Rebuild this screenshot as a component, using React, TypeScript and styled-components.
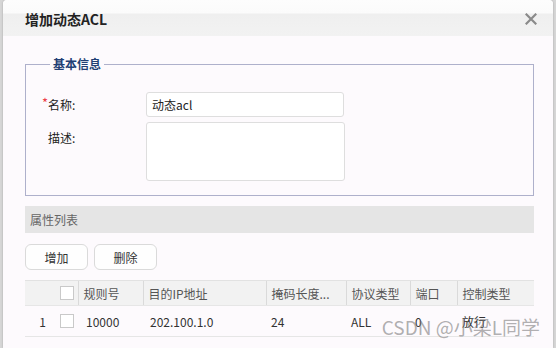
import styled, { createGlobalStyle } from "styled-components";

const GlobalStyle = createGlobalStyle`
  html, body {
    margin: 0;
    padding: 0;
    background: #d6d6d6;
    font-family: "Noto Sans CJK SC", "Noto Sans", sans-serif;
    font-size: 12px;
    color: #333;
  }
`;

const columns = [
  { key: "idx", title: "", width: 30 },
  { key: "check", title: "", width: 23 },
  { key: "rule", title: "规则号", width: 65 },
  { key: "ip", title: "目的IP地址", width: 123 },
  { key: "mask", title: "掩码长度...", width: 80 },
  { key: "proto", title: "协议类型", width: 64 },
  { key: "port", title: "端口", width: 47 },
  { key: "action", title: "控制类型", width: 77 },
];

const rows = [
  { idx: "1", rule: "10000", ip: "202.100.1.0", mask: "24", proto: "ALL", port: "0", action: "放行" },
];

const CloseIcon = () => (
  <svg width="12" height="12" viewBox="0 0 12 12">
    <path d="M1.5 1.5 L10.5 10.5 M10.5 1.5 L1.5 10.5" stroke="#8a8a8a" strokeWidth="2.2" strokeLinecap="square" />
  </svg>
);

export default function App() {
  return (
    <>
      <GlobalStyle />
      <Page>
        <Dialog>
          <Header>
            <Title>增加动态ACL</Title>
            <CloseButton aria-label="close">
              <CloseIcon />
            </CloseButton>
          </Header>
          <Body>
            <FieldSet>
              <Legend>基本信息</Legend>
              <FormGrid>
                <Label>
                  <Required>*</Required>名称:
                </Label>
                <TextInput defaultValue="动态acl" />
                <Label $top={3}>
                  <Required />描述:
                </Label>
                <TextArea />
              </FormGrid>
            </FieldSet>

            <SectionBar>属性列表</SectionBar>

            <Toolbar>
              <Button>增加</Button>
              <Button>删除</Button>
            </Toolbar>

            <Table>
              <colgroup>
                {columns.map((c) => (
                  <col key={c.key} style={{ width: c.width }} />
                ))}
              </colgroup>
              <thead>
                <tr>
                  {columns.map((c, i) => (
                    <HeadCell key={c.key} $divider={i >= 2}>
                      {c.key === "check" ? <CheckBox /> : c.title}
                    </HeadCell>
                  ))}
                </tr>
              </thead>
              <tbody>
                {rows.map((r) => (
                  <tr key={r.idx}>
                    <Cell $center>{r.idx}</Cell>
                    <Cell>
                      <CheckBox />
                    </Cell>
                    <Cell $indent={8}>{r.rule}</Cell>
                    <Cell $indent={7}>{r.ip}</Cell>
                    <Cell>{r.mask}</Cell>
                    <Cell>{r.proto}</Cell>
                    <Cell>{r.port}</Cell>
                    <Cell>{r.action}</Cell>
                  </tr>
                ))}
              </tbody>
            </Table>
          </Body>
          <Watermark>CSDN @小梁L同学</Watermark>
        </Dialog>
      </Page>
    </>
  );
}

const Page = styled.div`
  width: 556px;
  height: 348px;
  overflow: hidden;
  display: flex;
`;

const Dialog = styled.div`
  position: relative;
  width: 550px;
  height: 348px;
  margin-left: 3px;
  background: #fdfafd;
  border-radius: 4px 4px 0 0;
  box-shadow: 0 0 2px rgba(0, 0, 0, 0.25);
  display: flex;
  flex-direction: column;
`;

const Header = styled.div`
  height: 36px;
  flex-shrink: 0;
  display: flex;
  align-items: center;
  justify-content: space-between;
  padding: 0 16px 0 22px;
  background: linear-gradient(#fdfdfd 0, #fbfbfb 13px, #efefef 14px, #f2f2f2 36px);
  border-radius: 4px 4px 0 0;
`;

const Title = styled.div`
  font-size: 14px;
  font-weight: bold;
  color: #222;
  line-height: 18px;
  margin-top: 2px;
`;

const CloseButton = styled.div`
  width: 12px;
  height: 12px;
  display: flex;
  margin-top: 1px;
`;

const Body = styled.div`
  padding: 0 19px 0 22px;
  display: flex;
  flex-direction: column;
`;

const FieldSet = styled.fieldset`
  margin: 20px 0 0;
  padding: 20px 0 14px 16px;
  border: 1px solid #aeb0cb;
  min-width: 0;
`;

const Legend = styled.legend`
  margin-left: 8px;
  padding: 0 3px;
  font-size: 12px;
  line-height: 16px;
  font-weight: bold;
  color: #223f74;
`;

const FormGrid = styled.div`
  display: grid;
  grid-template-columns: 104px 199px;
  row-gap: 5px;
  align-items: start;
`;

const Label = styled.label<{ $top?: number }>`
  display: flex;
  line-height: 25px;
  padding-top: ${(p) => p.$top ?? 0}px;
  color: #222;
`;

const Required = styled.span`
  width: 6px;
  color: #ee3d48;
  font-size: 13px;
  line-height: 21px;
`;

const TextInput = styled.input`
  box-sizing: border-box;
  width: 198px;
  height: 25px;
  padding: 0 5px;
  border: 1px solid #dedede;
  border-radius: 3px;
  background: #fff;
  font-family: inherit;
  font-size: 12px;
  color: #222;
  outline: none;
`;

const TextArea = styled.textarea`
  box-sizing: border-box;
  width: 199px;
  height: 59px;
  padding: 4px 5px;
  border: 1px solid #dedede;
  border-radius: 3px;
  background: #fff;
  resize: none;
  outline: none;
  font-family: inherit;
`;

const SectionBar = styled.div`
  margin-top: 10px;
  height: 27px;
  line-height: 27px;
  padding-left: 5px;
  background: #e5e5e5;
  color: #666;
  font-size: 12px;
`;

const Toolbar = styled.div`
  margin-top: 11px;
  display: flex;
  gap: 6px;
`;

const Button = styled.button`
  width: 63px;
  height: 26px;
  border: 1px solid #dadada;
  border-radius: 6px;
  background: #fefefe;
  font-family: inherit;
  font-size: 12px;
  color: #333;
  padding: 0;
`;

const Table = styled.table`
  margin-top: 10px;
  width: 509px;
  table-layout: fixed;
  border-collapse: collapse;
`;

const HeadCell = styled.th<{ $divider?: boolean }>`
  height: 24px;
  padding: 0 0 0 5px;
  background: #f2f2f2;
  border-top: 1px solid #e2e2e2;
  border-bottom: 1px solid #e6e6e6;
  border-left: ${(p) => (p.$divider ? "1px solid #dadada" : "none")};
  text-align: left;
  font-weight: normal;
  color: #555;
  white-space: nowrap;
  overflow: hidden;
`;

const Cell = styled.td<{ $center?: boolean; $indent?: number }>`
  height: 30px;
  padding: 0 0 0 ${(p) => p.$indent ?? 5}px;
  border-bottom: 1px solid #e6e6e6;
  text-align: ${(p) => (p.$center ? "center" : "left")};
  color: #333;
  white-space: nowrap;
`;

const CheckBox = styled.span`
  display: block;
  box-sizing: border-box;
  width: 14px;
  height: 14px;
  border: 1px solid #c9c9c9;
  background: #fff;
`;

const Watermark = styled.div`
  position: absolute;
  right: 13px;
  bottom: 8px;
  font-size: 19px;
  color: rgba(110, 110, 110, 0.55);
  pointer-events: none;
  white-space: nowrap;
`;
